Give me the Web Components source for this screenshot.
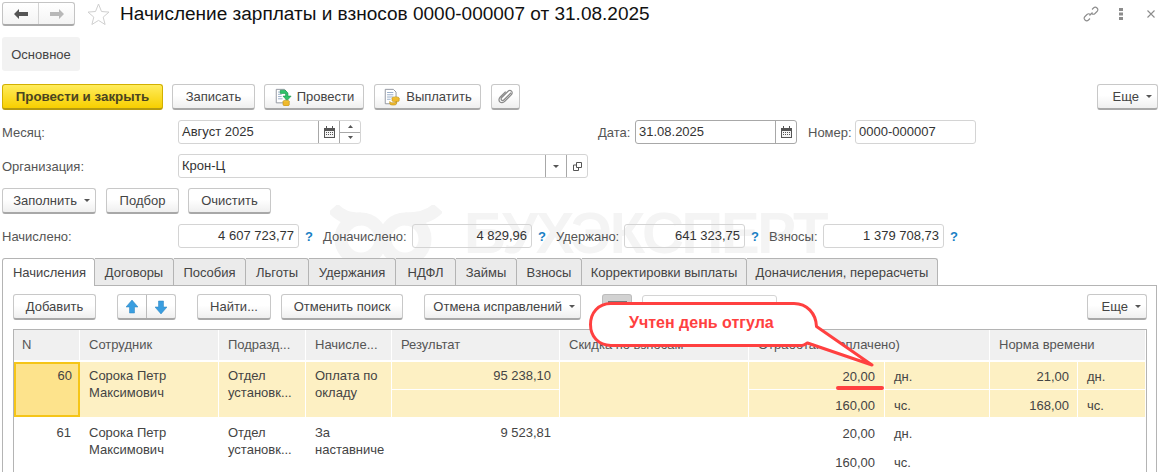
<!DOCTYPE html>
<html lang="ru"><head><meta charset="utf-8"><title>Начисление зарплаты</title>
<style>
html,body{margin:0;padding:0;background:#fff}
body{font:13px "Liberation Sans",Arial,sans-serif;color:#444}
</style></head>
<body>
<salary-doc>
  <water-mark></water-mark>
  <head-bar>Начисление зарплаты и взносов 0000-000007 от 31.08.2025</head-bar>
  <section-tab>Основное</section-tab>
  <btn-row mt="13">
    <ui-btn primary w="161">Провести и закрыть</ui-btn>
    <ui-btn w="83" ml="9">Записать</ui-btn>
    <ui-btn w="100" ml="9" icon="post">Провести</ui-btn>
    <ui-btn w="107" ml="10" icon="pay">Выплатить</ui-btn>
    <ui-btn w="29" ml="10" icon="clip"></ui-btn>
    <ui-btn w="61" push drop>Еще</ui-btn>
  </btn-row>
  <btn-row mt="10">
    <ui-label w="176">Месяц:</ui-label><ui-field w="183" btns="cal,spin">Август 2025</ui-field>
    <ui-label w="37" ml="237">Дата:</ui-label><ui-field w="162" btns="cal" dark>31.08.2025</ui-field>
    <ui-label w="47" ml="11">Номер:</ui-label><ui-field w="121">0000-000007</ui-field>
  </btn-row>
  <btn-row mt="10">
    <ui-label w="176">Организация:</ui-label><ui-field w="410" btns="down,open">Крон-Ц</ui-field>
  </btn-row>
  <btn-row mt="10">
    <ui-btn w="94" drop>Заполнить</ui-btn>
    <ui-btn w="73" ml="10">Подбор</ui-btn>
    <ui-btn w="83" ml="9">Очистить</ui-btn>
  </btn-row>
  <btn-row mt="10">
    <ui-label w="176">Начислено:</ui-label><ui-field w="121" right>4 607 723,77</ui-field><hint-mark></hint-mark>
    <ui-label w="89">Доначислено:</ui-label><ui-field w="120" right>4 829,96</ui-field><hint-mark></hint-mark>
    <ui-label w="68">Удержано:</ui-label><ui-field w="121" right>641 323,75</ui-field><hint-mark></hint-mark>
    <ui-label w="54">Взносы:</ui-label><ui-field w="121" right>1 379 708,73</ui-field><hint-mark></hint-mark>
  </btn-row>
  <doc-tabs></doc-tabs>
  <tab-panel>
    <btn-row slot="bar">
      <ui-btn w="83" ml="10">Добавить</ui-btn>
      <ui-arrows></ui-arrows>
      <ui-btn w="74" ml="21">Найти...</ui-btn>
      <ui-btn w="122" ml="10">Отменить поиск</ui-btn>
      <ui-btn w="157" ml="21" drop>Отмена исправлений</ui-btn>
      <ui-btn w="30" ml="21" grey></ui-btn>
      <ui-field w="135" ml="10"></ui-field>
      <ui-btn w="60" push drop>Еще</ui-btn>
    </btn-row>
    <data-grid></data-grid>
  </tab-panel>
  <call-out>Учтен день отгула</call-out>
</salary-doc>

<script>
const ICONS={
post:`<svg width="18" height="18" viewBox="0 0 20 20"><path d="M2.500 1.500h9l2 2v13h-11z" fill="#fff" stroke="#8a8f98"/><path d="M4.500 4.500h5M4.500 7h4M4.500 9.500h4M4.500 12h5" stroke="#8fa6c4"/><path d="M7 2.500h5.500l3 3V9H19l-4.500 5L10 9h3V6H7z" fill="#2fc56a" stroke="#16934a" stroke-width=".7"/><ellipse cx="13.500" cy="15" rx="3.500" ry="1.500" fill="#f5c83a" stroke="#b58a12" stroke-width=".6"/><path d="M10 15v3.500c0 .8 1.500 1.400 3.500 1.400S17 19.300 17 18.500V15" fill="#f0b92c" stroke="#b58a12" stroke-width=".6"/></svg>`,
pay:`<svg width="18" height="18" viewBox="0 0 20 20"><path d="M2.500 1.500h9l3 3v13h-12z" fill="#fff" stroke="#8a8f98"/><path d="M4.500 5h7M4.500 7.500h7M4.500 10h7M4.500 12.500h4" stroke="#8fa6c4"/><ellipse cx="14" cy="11.500" rx="4" ry="1.700" fill="#f5c83a" stroke="#b58a12" stroke-width=".6"/><path d="M10 11.500v2.500c0 .9 1.800 1.600 4 1.600s4-.7 4-1.600v-2.500" fill="#f0b92c" stroke="#b58a12" stroke-width=".6"/><path d="M7.500 15v2.500c0 .9 1.700 1.500 3.800 1.500s3.700-.6 3.700-1.500V15c0 .8-1.700 1.400-3.700 1.400S7.500 15.800 7.500 15z" fill="#f0b92c" stroke="#b58a12" stroke-width=".6"/></svg>`,
clip:`<svg width="16" height="16" viewBox="0 0 16 16"><path d="M13.500 3.500 6 11c-.9.900-2.200.900-2.800.3-.7-.7-.5-1.900.3-2.700l6.500-6.500c1.300-1.300 3-1.300 4-.3s1 2.700-.3 4l-7 7c-1.700 1.700-4 1.800-5.300.5s-1.200-3.500.5-5.200l5.800-5.800" fill="none" stroke="#8a8a8a" stroke-width="1.300" transform="translate(.5 .5) scale(.93)"/></svg>`,
cal:`<svg width="11" height="12" viewBox="0 0 11 12"><path d="M0 2h11v10H0z" fill="#555"/><path d="M2 0h1v3H2zM8 0h1v3H8z" fill="#555"/><path d="M1 5h9v6H1z" fill="#f4f4f4"/><path d="M2 6h1v1H2zM4 6h1v1H4zM6 6h1v1H6zM8 6h1v1H8zM2 8h1v1H2zM4 8h1v1H4zM6 8h1v1H6zM8 8h1v1H8z" fill="#555"/></svg>`,
open:`<svg width="9" height="9" viewBox="0 0 9 9" fill="none" stroke="#555"><path d="M3.500.5h5v5h-5zM3.500 3H.500v5.500h5V5.500"/></svg>`
};
const tri=(c='#555')=>`<svg width="6" height="3" viewBox="0 0 6 3"><path d="M0 0h6L3 3z" fill="${c}"/></svg>`;
const triUp=()=>`<svg width="5" height="3" viewBox="0 0 5 3"><path d="M0 3h5L2.500 0z" fill="#555"/></svg>`;
const triDn=()=>`<svg width="5" height="3" viewBox="0 0 5 3"><path d="M0 0h5L2.500 3z" fill="#555"/></svg>`;

class Base extends HTMLElement{
  mount(html){this.attachShadow({mode:'open'}).innerHTML=html;}
  box(){
    const w=this.getAttribute('w'),ml=this.getAttribute('ml'),mt=this.getAttribute('mt');
    if(w)this.style.width=w+'px';
    if(ml)this.style.marginLeft=ml+'px';
    if(mt)this.style.marginTop=mt+'px';
  }
}
customElements.define('salary-doc',class extends Base{constructor(){super();this.mount(`<style>:host{display:block;position:relative;isolation:isolate;width:1159px;height:472px;overflow:hidden;background:#fff}</style><slot></slot>`)}});

customElements.define('water-mark',class extends Base{constructor(){super();this.mount(`<style>
:host{display:block;position:absolute;left:0;top:0;width:1159px;height:300px;z-index:-1;pointer-events:none}
svg{position:absolute;left:330px;top:205px}
span{position:absolute;left:464px;top:203px;font:bold 58px/60px "Liberation Sans",sans-serif;color:#f4f4f4;letter-spacing:-2.3px;white-space:nowrap}
</style>
<svg width="112" height="62" viewBox="0 0 112 62" fill="none" stroke="#f4f4f4" stroke-width="13"><circle cx="31" cy="34" r="20"/><circle cx="75" cy="34" r="20"/><path d="M3 3c8 9 16 11 28 11M108 3c-8 9-20 11-33 11"/></svg>
<span>БУХЭКСПЕРТ</span>`)}});

customElements.define('head-bar',class extends Base{constructor(){super();this.mount(`<style>
:host{display:flex;align-items:center;height:24px;margin-top:2px;padding-left:2px;position:relative}
.nav{display:flex;width:73px;height:24px;box-sizing:border-box;border:1px solid #c4c4c4;border-bottom:2px solid #aaa;border-radius:3px;background:linear-gradient(#fff,#f4f4f4)}
.nav i{flex:1;display:flex;align-items:center;justify-content:center}
.nav i+i{border-left:1px solid #d4d4d4}
.star{margin-left:12px;display:block}
h1{margin:0 0 0 10px;font:normal 19.03px "Liberation Sans",sans-serif;color:#111;white-space:nowrap}
.tools{position:absolute;right:0;top:0;height:24px;display:flex;align-items:center}
.tools svg{display:block}
</style>
<div class="nav"><i><svg width="14" height="10" viewBox="0 0 14 10"><path d="M0 5 5 0v3h9v4H5v3z" fill="#555"/></svg></i><i><svg width="14" height="10" viewBox="0 0 14 10"><path d="M14 5 9 0v3H0v4h9v3z" fill="#b8b8b8"/></svg></i></div>
<svg class="star" width="23" height="22" viewBox="0 0 23 22"><path d="M11.500 1l3 7.500 7.500.6-5.800 5 1.900 7.400-6.600-4.100-6.600 4.100 1.900-7.400L1 9.100l7.500-.6z" fill="#fff" stroke="#cfcfcf"/></svg>
<h1><slot></slot></h1>
<div class="tools">
<svg style="margin-right:20px" width="16" height="16" viewBox="0 0 16 16" fill="none" stroke="#8c8c8c" stroke-width="1.100"><path d="M6.500 9.500l3-3M9 3.500l1.500-1.500a2.400 2.400 0 0 1 3.500 3.500L12 7.500a2.400 2.400 0 0 1-3.300 0M7 12.500L5.500 14A2.400 2.400 0 0 1 2 10.500L4 8.500a2.400 2.400 0 0 1 3.300 0"/></svg>
<svg style="margin-right:24px" width="4" height="12" viewBox="0 0 4 12" fill="#8c8c8c"><path d="M0 0h4v3H0zM0 4.500h4v3H0zM0 9h4v3H0z"/></svg>
<svg style="margin-right:4px" width="8" height="8" viewBox="0 0 8 8" stroke="#8c8c8c" stroke-width="1.100"><path d="M.5.500l7 7M7.500.500l-7 7"/></svg>
</div>`)}});

customElements.define('section-tab',class extends Base{constructor(){super();this.mount(`<style>
:host{display:flex;align-items:center;justify-content:center;width:78px;height:34px;margin:11px 0 0 2px;background:#f2f2f2;border-radius:3px;color:#444}
</style><slot></slot>`)}});

customElements.define('btn-row',class extends Base{constructor(){super();this.box();this.mount(`<style>
:host{display:flex;align-items:center;padding:0 1px 0 2px;min-height:24px}
</style><slot></slot>`)}});

customElements.define('ui-btn',class extends Base{connectedCallback(){
  if(this.shadowRoot)return;this.box();
  if(this.hasAttribute('push'))this.style.marginLeft='auto';
  const ic=this.getAttribute('icon');
  this.mount(`<style>
:host{display:flex;flex:none;align-items:center;justify-content:center;gap:5px;box-sizing:border-box;height:26px;border:1px solid #c8c8c8;border-bottom:2px solid #a8a8a8;border-radius:3px;background:linear-gradient(#fff 0,#fff 45%,#efefef 100%);color:#444;white-space:nowrap}
:host([primary]){background:linear-gradient(#ffec5c,#f7cf00);border-color:#d2b000;border-bottom-color:#b59a10;color:#4a4420;font-weight:bold;font-size:13.33px}
:host([grey]){background:#d2d2d2;border-color:#bcbcbc;align-items:flex-start}
:host([drop]){justify-content:flex-end;padding-right:5px;gap:7px}
svg{display:block;flex:none}
.bar{width:19px;height:3px;background:#777;margin-top:6px}
</style>${ic?ICONS[ic]:''}${this.hasAttribute('grey')?'<div class="bar"></div>':''}<slot></slot>${this.hasAttribute('drop')?`<span>${tri()}</span>`:''}`);
}});

customElements.define('ui-label',class extends Base{connectedCallback(){
  if(this.shadowRoot)return;this.box();
  this.mount(`<style>:host{display:block;flex:none;color:#555;white-space:nowrap}</style><slot></slot>`);
}});

customElements.define('hint-mark',class extends Base{constructor(){super();this.mount(`<style>
:host{display:block;flex:none;width:24px;box-sizing:border-box;padding-left:6px;color:#1a7fc4;font-weight:bold}
</style>?`)}});

customElements.define('ui-field',class extends Base{connectedCallback(){
  if(this.shadowRoot)return;this.box();
  const bs=(this.getAttribute('btns')||'').split(',').filter(Boolean);
  const parts=bs.map(b=>{
    if(b==='spin')return `<b class="spin"><i>${triUp()}</i><i>${triDn()}</i></b>`;
    if(b==='down')return `<b>${tri()}</b>`;
    return `<b>${ICONS[b]}</b>`;
  }).join('');
  this.mount(`<style>
:host{display:flex;flex:none;box-sizing:border-box;height:24px;border:1px solid #d4d4d4;border-radius:3px;color:#333;white-space:nowrap}
:host([dark]){border-color:#a8a8a8}
.t{flex:1;padding:0 3px;line-height:22px;min-width:0}
:host([right]) .t{text-align:right;padding-right:4px}
b{flex:none;width:20px;border-left:1px solid #a8a8a8;display:flex;align-items:center;justify-content:center}
.spin{flex-direction:column;align-items:stretch}
.spin i{flex:1;display:flex;align-items:center;justify-content:center}
.spin i+i{border-top:1px solid #a8a8a8}
svg{display:block}
</style><div class="t"><slot></slot></div>${parts}`);
}});

customElements.define('doc-tabs',class extends Base{constructor(){super();
  const T=[['Начисления',93],['Договоры',79],['Пособия',72],['Льготы',63],['Удержания',87],['НДФЛ',60],['Займы',61],['Взносы',65],['Корректировки выплаты',165],['Доначисления, перерасчеты',191]];
  this.mount(`<style>
:host{display:flex;height:27px;margin:10px 0 0 2px;position:relative;z-index:1}
div{box-sizing:border-box;display:flex;align-items:center;justify-content:center;background:#ebebeb;border:1px solid #b4b4b4;border-bottom:0;border-left:0;color:#444;white-space:nowrap;border-radius:0 3px 0 0;height:27px}
.a{background:#fff;height:28px;border-left:1px solid #b4b4b4;border-radius:3px 3px 0 0;padding-left:2px}
</style>${T.map((t,i)=>`<div class="${i?'':'a'}" style="width:${t[1]}px">${t[0]}</div>`).join('')}`)}});

customElements.define('tab-panel',class extends Base{constructor(){super();this.mount(`<style>
:host{display:block;box-sizing:border-box;margin:0 2px 0 2px;height:200px;border:1px solid #b4b4b4;border-bottom:0;padding:8px 9px 0 0}
::slotted([slot=bar]){padding:0 !important}
</style><slot name="bar"></slot><slot></slot>`)}});

customElements.define('ui-arrows',class extends Base{constructor(){super();this.mount(`<style>
:host{display:flex;flex:none;box-sizing:border-box;margin-left:21px;width:59px;height:26px;border:1px solid #c8c8c8;border-bottom:2px solid #a8a8a8;border-radius:3px;background:linear-gradient(#fff,#fff 45%,#efefef)}
i{flex:1;display:flex;align-items:center;justify-content:center}
i+i{border-left:1px solid #bbb}
</style><i><svg width="12" height="14" viewBox="0 0 12 14"><path d="M6 0l6 7H8.500v6h-5V7H0z" fill="#3a9ee0" stroke="#2b82bf" stroke-width=".5"/></svg></i><i><svg width="12" height="14" viewBox="0 0 12 14"><path d="M6 14L0 7h3.500V1h5v6H12z" fill="#3a9ee0" stroke="#2b82bf" stroke-width=".5"/></svg></i>`)}});

customElements.define('data-grid',class extends Base{constructor(){super();
  const H=[['N',1,1],['Сотрудник',2,1],['Подразд...',3,1],['Начисле...',4,1],['Результат',5,1],['Скидка по взносам',6,1],['Отработано (оплачено)',7,2],['Норма времени',9,2]];
  const head=H.map((h,i)=>`<div class="h${i?'':' first'}" style="grid-column:${h[1]}/span ${h[2]}">${h[0]}</div>`).join('');
  const row=(r,n,res,sel,norm)=>{
    const c=sel?' s':'';
    const two=`grid-row:${r}/span 3`;
    return `<div class="c r${c}${sel?' cur':''}" style="grid-column:1;${two}">${n}</div>
<div class="c${c}" style="grid-column:2;${two}">Сорока Петр<br>Максимович</div>
<div class="c${c}" style="grid-column:3;${two}">Отдел<br>установк...</div>
<div class="c${c}" style="grid-column:4;${two}">${sel?'Оплата по<br>окладу':'За<br>наставниче'}</div>
<div class="c r${c}" style="grid-column:5;grid-row:${r}">${res}</div>
<div class="c${c}" style="grid-column:5;grid-row:${r+2}"></div>
<div class="c${c}" style="grid-column:6;${two}"></div>
<div class="c r n w${c}" style="grid-column:7;grid-row:${r}">20,00</div>
<div class="c n${c}" style="grid-column:8;grid-row:${r}">дн.</div>
<div class="c r m w${c}" style="grid-column:7;grid-row:${r+2}">160,00</div>
<div class="c m${c}" style="grid-column:8;grid-row:${r+2}">чс.</div>
<div class="c r n${c}" style="grid-column:9;grid-row:${r}">${norm?norm[0]:''}</div>
<div class="c n${c}" style="grid-column:10;grid-row:${r}">${norm?'дн.':''}</div>
<div class="c r m${c}" style="grid-column:9;grid-row:${r+2}">${norm?norm[1]:''}</div>
<div class="c m${c}" style="grid-column:10;grid-row:${r+2}">${norm?'чс.':''}</div>`};
  this.mount(`<style>
:host{display:block;box-sizing:border-box;margin:9px 0 0 10px;border:1px solid #b4b4b4;border-bottom:0;height:143px;width:1134px;overflow:hidden}
.g{display:grid;grid-template-columns:66px 139px 87px 86px 168px 189px 136px 105px 88px 68px;grid-template-rows:30px 2px 27px 1px 27px 2px 27px 1px 27px;color:#444}
.h{background:#f0f0f0;border-right:1px solid #fff;box-sizing:border-box;padding:7px 0 0 9px;color:#555;white-space:nowrap;grid-row:1;line-height:16px}
.first{padding-left:8px}
.c{box-sizing:border-box;padding:5px 8px 0 9px;line-height:17px;border-right:1px solid #fff;white-space:nowrap;overflow:hidden}
.n{padding-top:6px}
.m{padding-top:7px}
.w{padding-right:9px}
.r{text-align:right}
.s{background:#fdf0c3}
.cur{background:#fde38c;border:2px solid #f5c518;padding:3px 6px 0 6px}
</style><div class="g">${head}${row(3,'60','95 238,10',true,['21,00','168,00'])}${row(7,'61','9 523,81',false)}</div>`)}});

customElements.define('call-out',class extends Base{constructor(){super();this.mount(`<style>
:host{display:block;position:absolute;left:585px;top:299px;width:295px;height:75px;z-index:2;overflow:visible}
svg{position:absolute;left:0;top:0}
span{position:absolute;left:44px;top:15px;font:bold 16px/18px "Liberation Sans",sans-serif;color:#ff4040;white-space:nowrap}
i{position:absolute;left:251px;top:87px;width:48px;height:4px;border-radius:2px;background:#ff4040}
</style><svg width="295" height="75" viewBox="0 0 295 75"><path d="M26 4.500H209c13 0 22 10 22.500 23L287 66 222.500 44c-2 .8-3 2.500-6 2.500H26C13 46.500 5.500 37 5.500 25.500S13 4.500 26 4.500z" fill="#fff" stroke="#ff4040" stroke-width="3" stroke-linejoin="round"/></svg><span><slot></slot></span><i></i>`)}});
</script>
</body></html>
